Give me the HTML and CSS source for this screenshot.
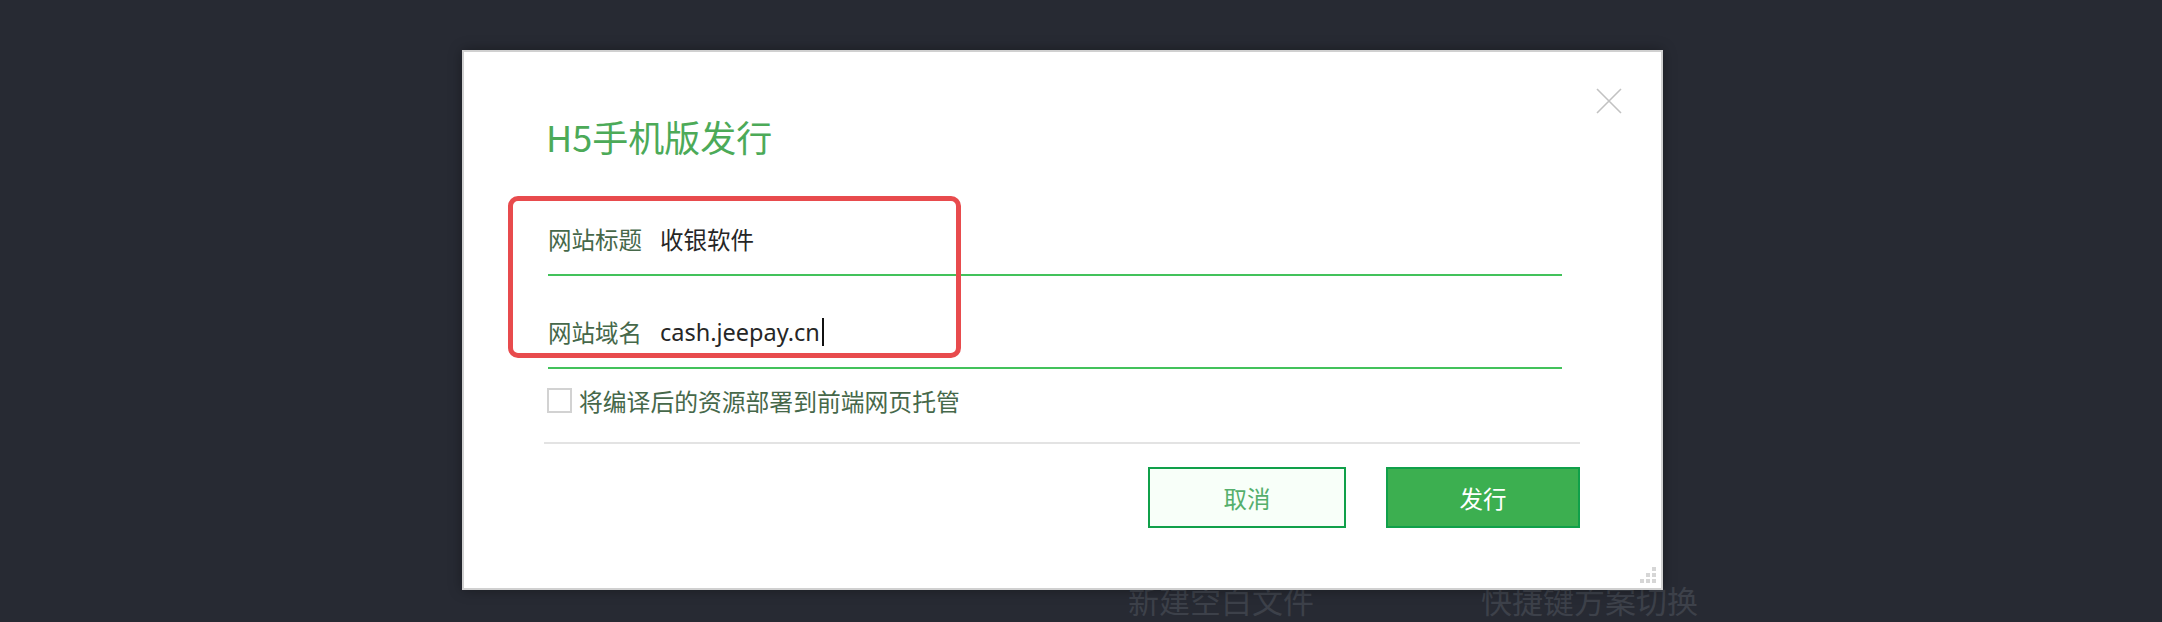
FILE: index.html
```html
<!DOCTYPE html>
<html lang="zh-CN">
<head>
<meta charset="utf-8">
<title>H5手机版发行</title>
<link rel="stylesheet" href="styles.css">
</head>
<body>
<div class="workspace">
  <div class="hints">
    <span class="hint">新建空白文件</span>
    <span class="hint">快捷键方案切换</span>
  </div>
</div>

<div class="dialog">
  <button class="close" aria-label="关闭">
    <svg width="26" height="26" viewBox="0 0 26 26"><path d="M1 1 L25 25 M25 1 L1 25" stroke="#c2c2c2" stroke-width="1.6" fill="none"/></svg>
  </button>
  <h1 class="title">H5手机版发行</h1>
  <div class="form">
    <div class="field">
      <span class="label">网站标题</span>
      <span class="value">收银软件</span>
    </div>
    <div class="field">
      <span class="label">网站域名</span>
      <span class="value">cash.jeepay.cn<span class="caret"></span></span>
    </div>
    <label class="check">
      <span class="box"></span>
      <span class="check-text">将编译后的资源部署到前端网页托管</span>
    </label>
  </div>
  <div class="footer">
    <button class="btn cancel">取消</button>
    <button class="btn primary">发行</button>
  </div>
  <div class="highlight"></div>
  <div class="grip">
    <i></i><i></i><i class="on"></i>
    <i></i><i class="on"></i><i class="on"></i>
    <i class="on"></i><i class="on"></i><i class="on"></i>
  </div>
</div>
</body>
</html>
```

FILE: styles.css
```css
html, body {
  margin: 0;
  padding: 0;
}
body {
  background: #272a33;
  font-family: "Noto Sans", "Noto Sans CJK SC", sans-serif;
  width: 2162px;
  height: 622px;
  overflow: hidden;
  position: relative;
}

.workspace {
  height: 622px;
  box-sizing: border-box;
  padding: 580px 0 0 1128px;
}
.hints {
  display: flex;
  gap: 167px;
}
.hint {
  font-family: "Noto Sans CJK SC", sans-serif;
  font-size: 31px;
  line-height: 40px;
  color: #3d414a;
}

.dialog {
  position: absolute;
  left: 462px;
  top: 50px;
  width: 1201px;
  height: 540px;
  box-sizing: border-box;
  background: #ffffff;
  border: 2px solid #d0d0d0;
  box-shadow: 0 0 12px rgba(0, 0, 0, 0.35);
  padding: 60px 81px 0 82px;
}

.close {
  position: absolute;
  top: 36px;
  right: 39px;
  width: 26px;
  height: 26px;
  padding: 0;
  border: 0;
  background: transparent;
  display: block;
}
.close svg { display: block; }

.title {
  margin: 0;
  font-family: "Noto Sans CJK SC", sans-serif;
  font-weight: normal;
  font-size: 36px;
  line-height: 48px;
  color: #4caa58;
}

.form {
  margin-top: 44px;
}
.field {
  display: flex;
  align-items: center;
  height: 70px;
  margin: 0 18px 0 2px;
  border-bottom: 2px solid #43c25b;
}
.field + .field {
  margin-top: 21px;
}
.label {
  font-family: "Noto Sans CJK SC", sans-serif;
  font-size: 23.5px;
  color: #46684a;
}
.value {
  margin-left: 18px;
  font-size: 23.5px;
  color: #262626;
  display: flex;
  align-items: center;
}
.caret {
  display: inline-block;
  width: 2px;
  height: 28px;
  background: #111;
  margin-left: 2px;
}

.check {
  display: flex;
  align-items: center;
  margin: 19px 0 0 1px;
  height: 25px;
}
.box {
  width: 25px;
  height: 25px;
  box-sizing: border-box;
  border: 2px solid #d2d2d2;
  background: #fff;
}
.check-text {
  margin-left: 7px;
  font-family: "Noto Sans CJK SC", sans-serif;
  font-size: 23.8px;
  color: #46684a;
}

.footer {
  margin: 29px 0 0 -2px;
  border-top: 2px solid #e3e3e3;
  padding-top: 23px;
  display: flex;
  justify-content: flex-end;
  gap: 40px;
}
.btn {
  height: 61px;
  box-sizing: border-box;
  border: 2px solid #10a04a;
  font-family: "Noto Sans CJK SC", sans-serif;
  font-size: 23.5px;
  padding: 0;
}
.cancel {
  width: 198px;
  background: #f8fff9;
  color: #55af6c;
}
.primary {
  width: 194px;
  background: #3caf50;
  color: #ffffff;
}

.highlight {
  position: absolute;
  left: 44px;
  top: 144px;
  width: 453px;
  height: 162px;
  box-sizing: border-box;
  border: 5px solid #e84b4d;
  border-radius: 10px;
  pointer-events: none;
}

.grip {
  position: absolute;
  right: 5px;
  bottom: 5px;
  display: grid;
  grid-template-columns: repeat(3, 4px);
  grid-template-rows: repeat(3, 4px);
  gap: 2px;
}
.grip i { display: block; }
.grip i.on { background: #d6d6d6; }
```
